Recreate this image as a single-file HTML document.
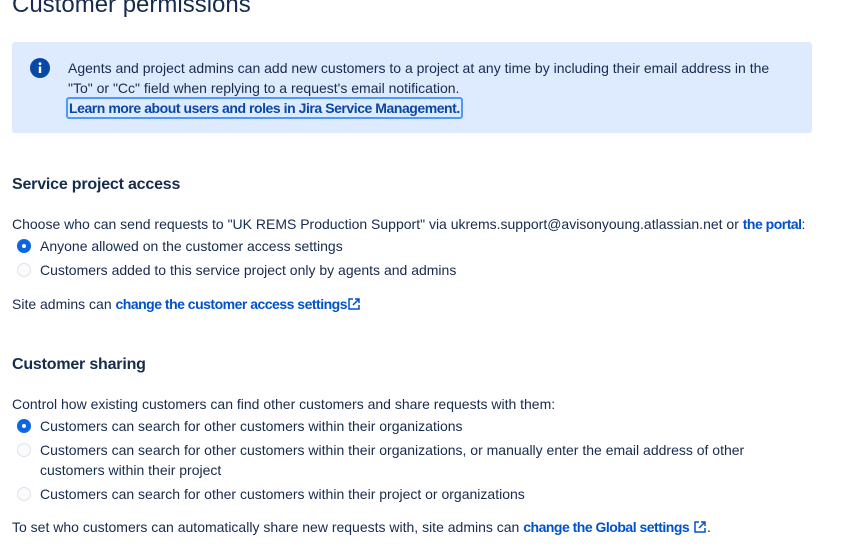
<!DOCTYPE html>
<html><head><meta charset="utf-8"><style>
body{margin:0;background:#fff;font-family:"Liberation Sans",sans-serif;color:#172b4d;font-size:14px;width:847px;height:553px;overflow:hidden;position:relative}
.a{position:absolute;white-space:nowrap;line-height:20px}
h1{position:absolute;left:12px;top:-11px;margin:0;font-size:24px;font-weight:500;line-height:32px}
h2{position:absolute;left:12px;margin:0;font-size:16px;font-weight:bold;line-height:20px;letter-spacing:-0.2px}
.box{position:absolute;left:12px;top:42px;width:800px;height:91px;background:#deebff;border-radius:3px}
.lk{color:#0052cc;font-weight:bold;letter-spacing:-0.5px}
.r{position:absolute;left:17px;width:14px;height:14px;border-radius:50%;box-sizing:border-box}
.on{background:#0c66e4;}
.on:after{content:"";position:absolute;left:5px;top:5px;width:4px;height:4px;border-radius:50%;background:#fff}
.off{border:1.5px solid #dfe1e6;background:#fafbfc}
</style></head><body>
<h1>Customer permissions</h1>
<div class="box"></div>
<svg style="position:absolute;left:30px;top:58px" width="20" height="20"><circle cx="10" cy="10" r="10" fill="#0747a6"/><rect x="8.8" y="8.5" width="2.4" height="6.5" fill="#fff"/><circle cx="10" cy="5.7" r="1.4" fill="#fff"/></svg>
<div class="a" style="left:68px;top:58px">Agents and project admins can add new customers to a project at any time by including their email address in the</div>
<div class="a" style="left:68px;top:78px">"To" or "Cc" field when replying to a request's email notification.</div>
<div class="a" style="left:66px;top:97px;border:2px solid #4c9aff;border-radius:3px;line-height:18px;padding:0 1px;color:#0747a6;font-weight:bold;letter-spacing:-0.45px">Learn more about users and roles in Jira Service Management.</div>
<h2 style="top:175px">Service project access</h2>
<div class="a" style="left:12px;top:214px">Choose who can send requests to "UK REMS Production Support" via ukrems.support@avisonyoung.atlassian.net or <span class="lk">the portal</span>:</div>
<div class="r on" style="top:239px"></div><div class="a" style="left:40px;top:236px">Anyone allowed on the customer access settings</div>
<div class="r off" style="top:263px"></div><div class="a" style="left:40px;top:260px">Customers added to this service project only by agents and admins</div>
<div class="a" style="left:12px;top:294px">Site admins can <span class="lk">change the customer access settings</span><svg width="14" height="14" viewBox="0 0 14 14" style="vertical-align:-2px"><path d="M6 2H2v10h10V8M8 2h4v4M12 2L6 8" fill="none" stroke="#0052cc" stroke-width="1.5"/></svg></div>
<h2 style="top:355px">Customer sharing</h2>
<div class="a" style="left:12px;top:394px">Control how existing customers can find other customers and share requests with them:</div>
<div class="r on" style="top:419px"></div><div class="a" style="left:40px;top:416px">Customers can search for other customers within their organizations</div>
<div class="r off" style="top:443px"></div><div class="a" style="left:40px;top:440px">Customers can search for other customers within their organizations, or manually enter the email address of other</div>
<div class="a" style="left:40px;top:460px">customers within their project</div>
<div class="r off" style="top:487px"></div><div class="a" style="left:40px;top:484px">Customers can search for other customers within their project or organizations</div>
<div class="a" style="left:12px;top:517px">To set who customers can automatically share new requests with, site admins can <span class="lk">change the Global settings</span> <svg width="14" height="14" viewBox="0 0 14 14" style="vertical-align:-2px"><path d="M6 2H2v10h10V8M8 2h4v4M12 2L6 8" fill="none" stroke="#0052cc" stroke-width="1.5"/></svg>.</div>
</body></html>
